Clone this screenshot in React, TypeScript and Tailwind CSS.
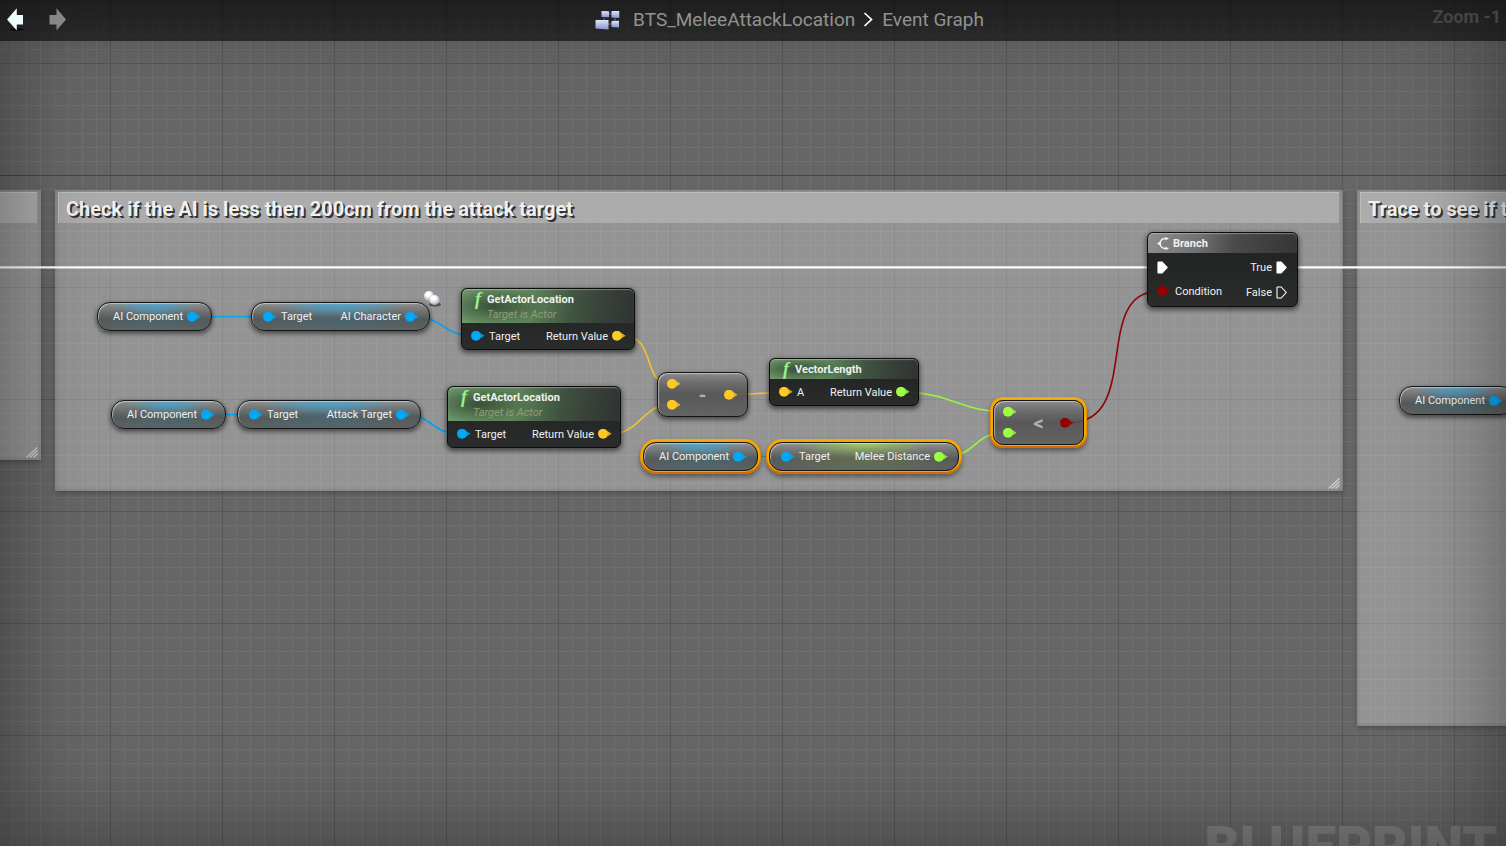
import React from "react";

type TPin = "object" | "vector" | "float" | "bool";

const pinColors: Record<TPin, string> = {
  object: "fill-[#00a8f6]",
  vector: "fill-[#ffc924]",
  float: "fill-[#9dff42]",
  bool: "fill-[#960000]",
};

const Pin = ({ type }: { type: TPin }) => (
  <svg className={`h-[10px] w-[14px] shrink-0 ${pinColors[type]}`} viewBox="0 0 14 10">
    <circle cx="5" cy="4.8" r="5" />
    <path d="M9.4 2 L13.6 4.8 L9.4 7.6 Z" opacity="0.8" />
  </svg>
);

const ExecPin = ({ filled = true }: { filled?: boolean }) => (
  <svg className="h-[13px] w-[11px] shrink-0" viewBox="0 0 11 13">
    <path
      d="M1 1.6 Q1 1 1.6 1 H5.2 L10.2 6.5 L5.2 12 H1.6 Q1 12 1 11.4 Z"
      fill={filled ? "#fff" : "none"}
      stroke="#fff"
      strokeWidth="1.1"
    />
  </svg>
);

const Label = ({ children }: { children: React.ReactNode }) => (
  <span className="pt-px leading-4">{children}</span>
);

const pillGlow = {
  object:
    "bg-[radial-gradient(ellipse_38%_50%_at_50%_0%,#3fa9dccc_0%,#3fa9dc77_50%,transparent_100%),radial-gradient(ellipse_50%_60%_at_50%_65%,#2f7fa04d,transparent),linear-gradient(#8e8e8ee6_0%,#686a6ae6_35%,#4f5252e6_60%,#585b5be6_100%)]",
  float:
    "bg-[radial-gradient(ellipse_38%_50%_at_50%_0%,#a5e052cc_0%,#96c85877_50%,transparent_100%),radial-gradient(ellipse_50%_60%_at_50%_65%,#7fa0404d,transparent),linear-gradient(#8e8e8ee6_0%,#686a6ae6_35%,#4f5252e6_60%,#585b5be6_100%)]",
};

const idleShadow =
  "shadow-[inset_1px_1px_1px_#ffffff77,0_2px_4px_1px_#00000077]";
const selectedShadow =
  "shadow-[inset_1px_1px_1px_#ffffff77,0_-1px_0_2px_#f2ab05,0_1px_0_2px_#d26c00,0_0_0_3px_#e58e04,0_3px_5px_3px_#00000066]";

type TVariableNode = {
  className: string;
  name: string;
  target?: boolean;
  type?: "object" | "float";
  selected?: boolean;
};

const VariableNode = ({
  className,
  name,
  target,
  type = "object",
  selected,
}: TVariableNode) => (
  <div
    className={`absolute flex h-[29px] items-center justify-between rounded-[13px] border border-[#151515] pr-[10px] pl-[11px] ${
      pillGlow[type]
    } ${selected ? selectedShadow : idleShadow} ${className}`}
  >
    {target && (
      <span className="flex items-center gap-1">
        <Pin type="object" />
        <Label>Target</Label>
      </span>
    )}
    <span className="ml-auto flex items-center gap-1">
      <Label>{name}</Label>
      <Pin type={type} />
    </span>
  </div>
);

type TFunctionNode = {
  className: string;
  title: string;
  subtitle?: string;
  input: string;
  inputType: TPin;
  outputType: TPin;
};

const nodeFrame =
  "absolute overflow-hidden rounded-[6px] border border-[#0c0c0c] bg-[linear-gradient(#191b1af2,#242725f2)] shadow-[0_2px_5px_1px_#00000088]";

const FunctionNode = ({
  className,
  title,
  subtitle,
  input,
  inputType,
  outputType,
}: TFunctionNode) => (
  <div className={`${nodeFrame} ${className}`}>
    <div className="flex gap-1 rounded-t-[5px] bg-[radial-gradient(ellipse_30%_55%_at_18%_50%,#2c402ccc,transparent),linear-gradient(100deg,#6f9a6c_0%,#5d8259_40%,#3f5340_65%,#39423a_80%,#2f3330_100%)] pl-[13px] shadow-[inset_0_1px_1px_#ffffff55]">
      <span className="w-2 font-['Liberation_Serif',serif] text-[18px] leading-5 font-bold text-[#9df091] italic">
        f
      </span>
      <div>
        <h3 className="pt-[2px] text-[11px] leading-[18px] font-bold text-[#eef2ee]">
          {title}
        </h3>
        {subtitle && (
          <p className="-mt-[2px] text-[11px] leading-4 text-[#8f9f72] italic">
            {subtitle}
          </p>
        )}
      </div>
    </div>
    <div className="flex h-[26px] items-center justify-between pr-2 pl-[9px]">
      <span className="flex items-center gap-1">
        <Pin type={inputType} />
        <Label>{input}</Label>
      </span>
      <span className="flex items-center gap-1">
        <Label>Return Value</Label>
        <Pin type={outputType} />
      </span>
    </div>
  </div>
);

type TOperatorNode = {
  className: string;
  sign: string;
  inputType: TPin;
  outputType: TPin;
  selected?: boolean;
};

const OperatorNode = ({
  className,
  sign,
  inputType,
  outputType,
  selected,
}: TOperatorNode) => (
  <div
    className={`absolute flex h-[45px] w-[91px] items-center justify-between rounded-[10px] border border-[#151515] bg-[linear-gradient(#8a8a8ae6_0%,#666666e6_25%,#525252e6_50%,#5e5e5ee6_100%)] px-[9px] ${
      selected ? selectedShadow : idleShadow
    } ${className}`}
  >
    <span className="flex flex-col gap-[11px]">
      <Pin type={inputType} />
      <Pin type={inputType} />
    </span>
    <span className="text-[20px] font-bold text-[#b0b0b0]">{sign}</span>
    <Pin type={outputType} />
  </div>
);

const BranchNode = ({ className }: { className: string }) => (
  <div className={`${nodeFrame} ${className}`}>
    <div className="flex h-5 items-center gap-1 rounded-t-[5px] bg-[linear-gradient(100deg,#8d8d8d_0%,#707070_35%,#4a4a4a_58%,#353535_100%)] pl-[9px] shadow-[inset_0_1px_1px_#ffffff55]">
      <svg className="h-[13px] w-3" viewBox="0 0 12 13" fill="none" stroke="#f2f2f2">
        <path d="M10 1.5 H8 Q3.5 1.8 3.2 6.5 Q3.5 11.2 8 11.5 H10" strokeWidth="1.3" />
        <path d="M0 6.5 L3.5 4 V9 Z M8.5 0 L12 1.5 L8.5 3.2 Z M8.5 9.8 L12 11.5 L8.5 13 Z" fill="#f2f2f2" stroke="none" />
      </svg>
      <h3 className="pt-[2px] text-[11px] leading-4 font-bold text-[#f0f0f0]">Branch</h3>
    </div>
    <div className="flex justify-between pt-[2px] pr-[10px] pb-px pl-[9px]">
      <div>
        <div className="flex h-6 items-center">
          <ExecPin />
        </div>
        <div className="flex h-6 items-center gap-1">
          <Pin type="bool" />
          <Label>Condition</Label>
        </div>
      </div>
      <div>
        <div className="flex h-6 items-center justify-end gap-1">
          <Label>True</Label>
          <ExecPin />
        </div>
        <div className="flex h-[26px] items-center justify-end gap-1">
          <Label>False</Label>
          <ExecPin filled={false} />
        </div>
      </div>
    </div>
  </div>
);

const Comment = ({ className, title }: { className: string; title?: string }) => (
  <section
    className={`absolute bg-[#ffffff4d] pt-[2px] pr-1 pl-[3px] shadow-[inset_0_0_5px_#00000030,0_2px_5px_#00000040] ${className}`}
  >
    <h2 className="h-[31px] truncate border-t border-l border-[#bdbdbd] bg-[#acacac] px-[7px] text-[20px] leading-8 font-bold text-[#f0f0f0] [text-shadow:1px_1px_0_#333,2px_2px_0_#333]">
      {title}
    </h2>
    <svg
      className="absolute right-[3px] bottom-[2px] h-[11px] w-3"
      viewBox="0 0 12 11"
      stroke="#cfcfcf"
      strokeWidth="1.2"
    >
      <path d="M0.5 10.5 L11.5 0.5 M4 10.5 L11.5 3.5 M7.5 10.5 L11.5 6.8" />
    </svg>
  </section>
);

const Wires = () => (
  <svg className="absolute inset-0 h-full w-full" fill="none" strokeWidth="1.6">
    <g stroke="#fff" strokeWidth="2.4">
      <path d="M0 267.4 H1150" />
      <path d="M1295 267.4 H4000" />
    </g>
    <g stroke="#00a2ee">
      <path d="M198 316.5 H268" />
      <path d="M212 414.5 H254" />
      <path d="M415 316.5 C440 316.5 446 336 472 336" />
      <path d="M406 414.5 C430 414.5 434 434 458 434" />
      <path d="M744 456.5 H784" />
      <path d="M1500 400.5 H4000" />
    </g>
    <g stroke="#f5c02c">
      <path d="M624 336 C656 336 642 384 670 384" />
      <path d="M610 434 C640 434 643 404.5 670 404.5" />
      <path d="M736 394.5 C752 394.5 764 392.5 782 392.5" />
    </g>
    <g stroke="#98f542">
      <path d="M908 392.5 C946 392.5 966 412 1005 412" />
      <path d="M946 456.5 C976 456.5 974 432.5 1005 432.5" />
    </g>
    <path stroke="#8c0606" d="M1070 422.5 C1142 422.5 1092 291.5 1158 291.5" />
  </svg>
);

const GraphIcon = () => (
  <svg className="h-5 w-[25px]" viewBox="0 0 25 20">
    <defs>
      <linearGradient id="tile" x1="0" y1="0" x2="0" y2="1">
        <stop offset="0" stopColor="#dfe6fb" />
        <stop offset="1" stopColor="#8494d0" />
      </linearGradient>
    </defs>
    <path d="M12 4 H18 M9 8 V11 M20 8 V11 M12 14 H18" stroke="#66708f" />
    <path d="M6.5 1 L14 1.3 V7.3 L6.5 7 Z" fill="url(#tile)" />
    <path d="M16.5 1 H24.3 V8 L16.5 7.5 Z" fill="url(#tile)" />
    <path d="M0.5 10 H13.5 V19.6 L0.5 18.5 Z" fill="url(#tile)" />
    <path d="M16.5 11 L24 10.8 V17.5 L16.5 17 Z" fill="url(#tile)" />
  </svg>
);

const Header = () => (
  <header className="relative flex h-[41px] items-center bg-[linear-gradient(#000000a0,#0000008c)] pb-[2px]">
    <nav className="flex w-[73px] shrink-0 justify-between px-[6px]">
      <button type="button" aria-label="Back">
        <svg className="h-6 w-[18px]" viewBox="0 0 18 24">
          <ellipse cx="11" cy="21.5" rx="7" ry="1.4" fill="#0b0b0b" />
          <path d="M1 11.500 L10.800 0.300 V7 H17 V16.500 H10.800 V22.500 Z" fill="#eefbfd" />
        </svg>
      </button>
      <button type="button" aria-label="Forward">
        <svg className="h-6 w-[18px]" viewBox="0 0 18 24">
          <path d="M17 11.500 L7.500 0.300 V7 H0.500 V16.500 H7.500 V22.500 Z" fill="#878787" />
        </svg>
      </button>
    </nav>
    <div className="flex flex-1 items-center justify-center text-[19px] leading-6 text-[#929292]">
      <GraphIcon />
      <span className="ml-[13px]">BTS_MeleeAttackLocation</span>
      <svg className="mr-[9px] ml-2 h-[15px] w-[10px]" viewBox="0 0 10 15" fill="none" stroke="#fff" strokeWidth="1.7">
        <path d="M1.5 1 L8.5 7.5 L1.5 14" />
      </svg>
      <span>Event Graph</span>
    </div>
    <span className="absolute top-[5px] right-[5px] text-[18px] leading-6 font-bold text-[#444]">
      Zoom -1
    </span>
  </header>
);

const Graph = () => (
  <main className="absolute inset-0 bg-[#666] bg-[linear-gradient(to_right,#575757_1px,transparent_1px),linear-gradient(#575757_1px,transparent_1px),linear-gradient(to_right,#6f6f6f_1px,transparent_1px),linear-gradient(#6f6f6f_1px,transparent_1px)] bg-size-[112px_112px,112px_112px,14px_14px,14px_14px] bg-position-[110px_0,0_63px,12px_0,0_7px]">
    <div className="absolute inset-x-0 top-[175px] h-px bg-[#454545]" />
    <span className="absolute top-[815px] right-[9px] text-[55px] leading-[64px] font-black text-[#7e7e7e]">
      BLUEPRINT
    </span>

    <Comment className="top-[190px] left-[-200px] h-[270px] w-[241px]" />
    <Comment
      className="top-[190px] left-[55px] h-[301px] w-[1288px]"
      title="Check if the AI is less then 200cm from the attack target"
    />
    <Comment
      className="top-[190px] left-[1357px] h-[536px] w-[700px]"
      title="Trace to see if the AI can reach the attack target"
    />

    <Wires />

    <VariableNode className="top-[302px] left-[97px] w-[115px]" name="AI Component" />
    <VariableNode className="top-[302px] left-[251px] w-[179px]" name="AI Character" target />
    <svg className="absolute top-[290px] left-[423px] h-[18px] w-[18px]" viewBox="0 0 18 18">
      <defs>
        <radialGradient id="ball" cx="0.4" cy="0.3" r="0.7">
          <stop offset="0.3" stopColor="#fff" />
          <stop offset="1" stopColor="#a4abc0" />
        </radialGradient>
      </defs>
      <ellipse cx="12" cy="14.5" rx="6" ry="2" fill="#00000077" />
      <circle cx="6" cy="6" r="5" fill="url(#ball)" />
      <circle cx="11.5" cy="10" r="5" fill="url(#ball)" />
    </svg>
    <FunctionNode
      className="top-[288px] left-[461px] w-[174px]"
      title="GetActorLocation"
      subtitle="Target is Actor"
      input="Target"
      inputType="object"
      outputType="vector"
    />

    <VariableNode className="top-[400px] left-[111px] w-[115px]" name="AI Component" />
    <VariableNode className="top-[400px] left-[237px] w-[184px]" name="Attack Target" target />
    <FunctionNode
      className="top-[386px] left-[447px] w-[174px]"
      title="GetActorLocation"
      subtitle="Target is Actor"
      input="Target"
      inputType="object"
      outputType="vector"
    />

    <OperatorNode
      className="top-[372px] left-[657px]"
      sign="-"
      inputType="vector"
      outputType="vector"
    />
    <FunctionNode
      className="top-[358px] left-[769px] w-[150px]"
      title="VectorLength"
      input="A"
      inputType="vector"
      outputType="float"
    />
    <VariableNode className="top-[442px] left-[643px] w-[115px]" name="AI Component" selected />
    <VariableNode
      className="top-[442px] left-[769px] w-[190px]"
      name="Melee Distance"
      type="float"
      target
      selected
    />
    <OperatorNode
      className="top-[400px] left-[993px]"
      sign="<"
      inputType="float"
      outputType="bool"
      selected
    />
    <BranchNode className="top-[232px] left-[1147px] w-[151px]" />
    <VariableNode className="top-[386px] left-[1399px] w-[115px]" name="AI Component" />

    <div className="pointer-events-none absolute inset-0 shadow-[inset_0_0_100px_#00000070]" />
  </main>
);

export default function App() {
  return (
    <div className="relative h-screen overflow-hidden font-[Roboto,sans-serif] text-[11px] text-[#f0f0f0]">
      <Graph />
      <Header />
    </div>
  );
}
